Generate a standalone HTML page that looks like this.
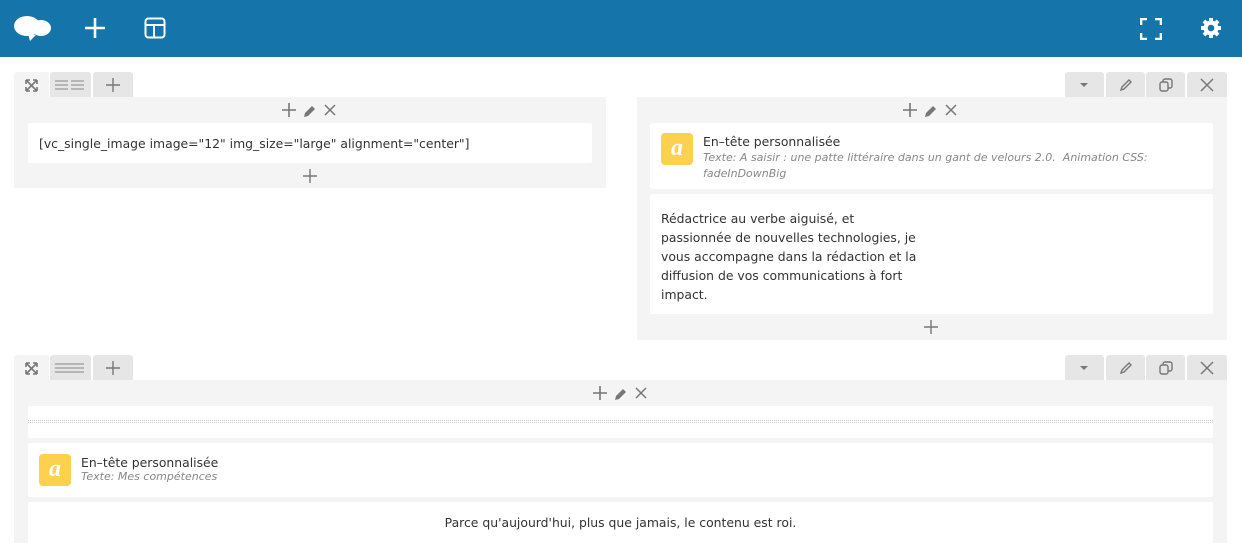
<!DOCTYPE html>
<html><head><meta charset="utf-8"><style>
*{box-sizing:border-box;margin:0;padding:0}
body{width:1242px;height:543px;overflow:hidden;background:#fff;font-family:"DejaVu Sans","Liberation Sans",sans-serif;position:relative;color:#333}
.a{position:absolute}
.bar{left:0;top:0;width:1242px;height:57px;background:#1574aa}
.tab{height:25px;top:0;border-radius:3px 3px 0 0;background:#e6e6e6}
.col{background:#f4f4f4}
.el{background:#fff;border-radius:2px}
.t{font-size:12.4px;color:#333}
.i{font-size:11px;font-style:italic;color:#888}
.ic{width:32px;height:32px;background:#fdd14d;border-radius:4px;color:#fff;font-family:"Liberation Serif",serif;font-style:italic;font-weight:bold;font-size:24px;text-align:center;line-height:30px}
</style></head><body>
<div class="a bar">
<svg class="a" style="left:14px;top:14px" width="38" height="28" viewBox="0 0 38 28"><ellipse cx="13" cy="12" rx="13" ry="10" fill="#fff"/><ellipse cx="27" cy="14" rx="10" ry="8" fill="#fff"/><path d="M14 20 L16 27 L22 21 Z" fill="#fff"/></svg>
<svg class="a" style="left:84px;top:17px" width="22" height="22"><path d="M11 1V21M1 11H21" stroke="#fff" stroke-width="2.6"/></svg>
<svg class="a" style="left:144px;top:17px" width="22" height="22"><rect x="1.5" y="1.5" width="19" height="19" rx="3" fill="none" stroke="#fff" stroke-width="2"/><path d="M1.5 8H20.5M10 8V20.5" stroke="#fff" stroke-width="2"/></svg>
<svg class="a" style="left:1140px;top:18px" width="22" height="22"><path d="M1 7V1H7M15 1H21V7M21 15V21H15M7 21H1V15" fill="none" stroke="#fff" stroke-width="2.6"/></svg>
<svg class="a" style="left:1200px;top:17px" width="22" height="22" viewBox="0 0 22 22"><g fill="#fff"><circle cx="11" cy="11" r="7.5"/><rect x="9" y="1" width="4" height="20"/><rect x="1" y="9" width="20" height="4"/><rect x="9" y="1" width="4" height="20" transform="rotate(45 11 11)"/><rect x="9" y="1" width="4" height="20" transform="rotate(-45 11 11)"/></g><circle cx="11" cy="11" r="3.3" fill="#1574aa"/></svg>
</div>

<div class="a" style="left:14px;top:72px;width:120px;height:26px">
<div class="a tab" style="left:0;width:35px;background:#f4f4f4"></div>
<div class="a tab" style="left:36px;width:41px"></div>
<div class="a tab" style="left:79px;width:40px"></div>
<svg class="a" style="left:11px;top:7px" width="13" height="13"><path d="M1 1L12 12M12 1L1 12M1 1h4M1 1v4M12 1h-4M12 1v4M1 12h4M1 12v-4M12 12h-4M12 12v-4" stroke="#777" stroke-width="1.6" fill="none"/></svg>
<svg class="a" style="left:41px;top:8px" width="31" height="10"><path d="M0 1H13M0 5H13M0 9H13M16 1H29M16 5H29M16 9H29" stroke="#999" stroke-width="1.3"/></svg>
<svg class="a" style="left:91px;top:5px" width="16" height="16"><path d="M8 1V15M1 8H15" stroke="#777" stroke-width="1.4"/></svg>
</div>
<div class="a" style="left:1065px;top:72px;width:162px;height:26px">
<div class="a tab" style="left:0;width:39px"></div><div class="a tab" style="left:41px;width:39px"></div><div class="a tab" style="left:81px;width:39px"></div><div class="a tab" style="left:122px;width:40px"></div>
<svg class="a" style="left:15px;top:11px" width="8" height="4"><path d="M0 0H8L4 4Z" fill="#777"/></svg>
<svg class="a" style="left:54px;top:6px" width="14" height="14"><path d="M2 12L3 9L10 2L12 4L5 11Z" fill="none" stroke="#777" stroke-width="1.4"/></svg>
<svg class="a" style="left:94px;top:6px" width="14" height="14"><rect x="1" y="4" width="8" height="9" rx="2" fill="none" stroke="#777" stroke-width="1.4"/><path d="M4 4V3a2 2 0 012-2h5a2 2 0 012 2v5a2 2 0 01-2 2h-2" fill="none" stroke="#777" stroke-width="1.4"/></svg>
<svg class="a" style="left:135px;top:6px" width="14" height="14"><path d="M1 1L13 13M13 1L1 13" stroke="#777" stroke-width="1.5"/></svg>
</div>

<div class="a col" style="left:14px;top:97px;width:592px;height:91px"></div>
<div class="a col" style="left:637px;top:97px;width:590px;height:243px"></div>

<svg class="a" style="left:281px;top:102px" width="58" height="16"><path d="M8 1V15M1 8H15" stroke="#777" stroke-width="1.6"/><path d="M23 15L24 11L31 4L34 7L27 14Z" fill="#777"/><path d="M44 3L54 13M54 3L44 13" stroke="#777" stroke-width="1.5"/></svg>
<div class="a el" style="left:28px;top:123px;width:564px;height:40px"></div>
<div class="a t" style="left:39px;top:136px">[vc_single_image image="12" img_size="large" alignment="center"]</div>
<svg class="a" style="left:302px;top:168px" width="16" height="16"><path d="M8 1V15M1 8H15" stroke="#777" stroke-width="1.4"/></svg>

<svg class="a" style="left:902px;top:102px" width="58" height="16"><path d="M8 1V15M1 8H15" stroke="#777" stroke-width="1.6"/><path d="M23 15L24 11L31 4L34 7L27 14Z" fill="#777"/><path d="M44 3L54 13M54 3L44 13" stroke="#777" stroke-width="1.5"/></svg>
<div class="a el" style="left:650px;top:123px;width:563px;height:66px"></div>
<div class="a ic" style="left:661px;top:133px">a</div>
<div class="a t" style="left:703px;top:134px">En–tête personnalisée</div>
<div class="a i" style="left:703px;top:150px;line-height:16px;width:475px">Texte: A saisir : une patte littéraire dans un gant de velours 2.0.&nbsp; Animation CSS: fadeInDownBig</div>
<div class="a el" style="left:650px;top:194px;width:563px;height:120px"></div>
<div class="a t" style="left:661px;top:209px;line-height:19px;width:262px">Rédactrice au verbe aiguisé, et passionnée de nouvelles technologies, je vous accompagne dans la rédaction et la diffusion de vos communications à fort impact.</div>
<svg class="a" style="left:923px;top:319px" width="16" height="16"><path d="M8 1V15M1 8H15" stroke="#777" stroke-width="1.4"/></svg>

<div class="a" style="left:14px;top:355px;width:120px;height:26px">
<div class="a tab" style="left:0;width:35px;background:#f4f4f4"></div>
<div class="a tab" style="left:36px;width:41px"></div>
<div class="a tab" style="left:79px;width:40px"></div>
<svg class="a" style="left:11px;top:7px" width="13" height="13"><path d="M1 1L12 12M12 1L1 12M1 1h4M1 1v4M12 1h-4M12 1v4M1 12h4M1 12v-4M12 12h-4M12 12v-4" stroke="#777" stroke-width="1.6" fill="none"/></svg>
<svg class="a" style="left:41px;top:8px" width="31" height="10"><path d="M0 1H29M0 5H29M0 9H29" stroke="#999" stroke-width="1.3"/></svg>
<svg class="a" style="left:91px;top:5px" width="16" height="16"><path d="M8 1V15M1 8H15" stroke="#777" stroke-width="1.4"/></svg>
</div>
<div class="a" style="left:1065px;top:355px;width:162px;height:26px">
<div class="a tab" style="left:0;width:39px"></div><div class="a tab" style="left:41px;width:39px"></div><div class="a tab" style="left:81px;width:39px"></div><div class="a tab" style="left:122px;width:40px"></div>
<svg class="a" style="left:15px;top:11px" width="8" height="4"><path d="M0 0H8L4 4Z" fill="#777"/></svg>
<svg class="a" style="left:54px;top:6px" width="14" height="14"><path d="M2 12L3 9L10 2L12 4L5 11Z" fill="none" stroke="#777" stroke-width="1.4"/></svg>
<svg class="a" style="left:94px;top:6px" width="14" height="14"><rect x="1" y="4" width="8" height="9" rx="2" fill="none" stroke="#777" stroke-width="1.4"/><path d="M4 4V3a2 2 0 012-2h5a2 2 0 012 2v5a2 2 0 01-2 2h-2" fill="none" stroke="#777" stroke-width="1.4"/></svg>
<svg class="a" style="left:135px;top:6px" width="14" height="14"><path d="M1 1L13 13M13 1L1 13" stroke="#777" stroke-width="1.5"/></svg>
</div>
<div class="a col" style="left:14px;top:380px;width:1213px;height:163px"></div>
<svg class="a" style="left:592px;top:385px" width="58" height="16"><path d="M8 1V15M1 8H15" stroke="#777" stroke-width="1.6"/><path d="M23 15L24 11L31 4L34 7L27 14Z" fill="#777"/><path d="M44 3L54 13M54 3L44 13" stroke="#777" stroke-width="1.5"/></svg>
<div class="a el" style="left:28px;top:406px;width:1185px;height:32px"></div>
<div class="a" style="left:28px;top:420px;width:1185px;height:3px;border-top:1px dotted #ccc;border-bottom:1px dotted #ccc"></div>
<div class="a el" style="left:28px;top:443px;width:1185px;height:54px"></div>
<div class="a ic" style="left:39px;top:454px">a</div>
<div class="a t" style="left:81px;top:455px">En–tête personnalisée</div>
<div class="a i" style="left:81px;top:470px">Texte: Mes compétences</div>
<div class="a el" style="left:28px;top:502px;width:1185px;height:45px"></div>
<div class="a t" style="left:28px;top:515px;width:1185px;text-align:center">Parce qu'aujourd'hui, plus que jamais, le contenu est roi.</div>
</body></html>
